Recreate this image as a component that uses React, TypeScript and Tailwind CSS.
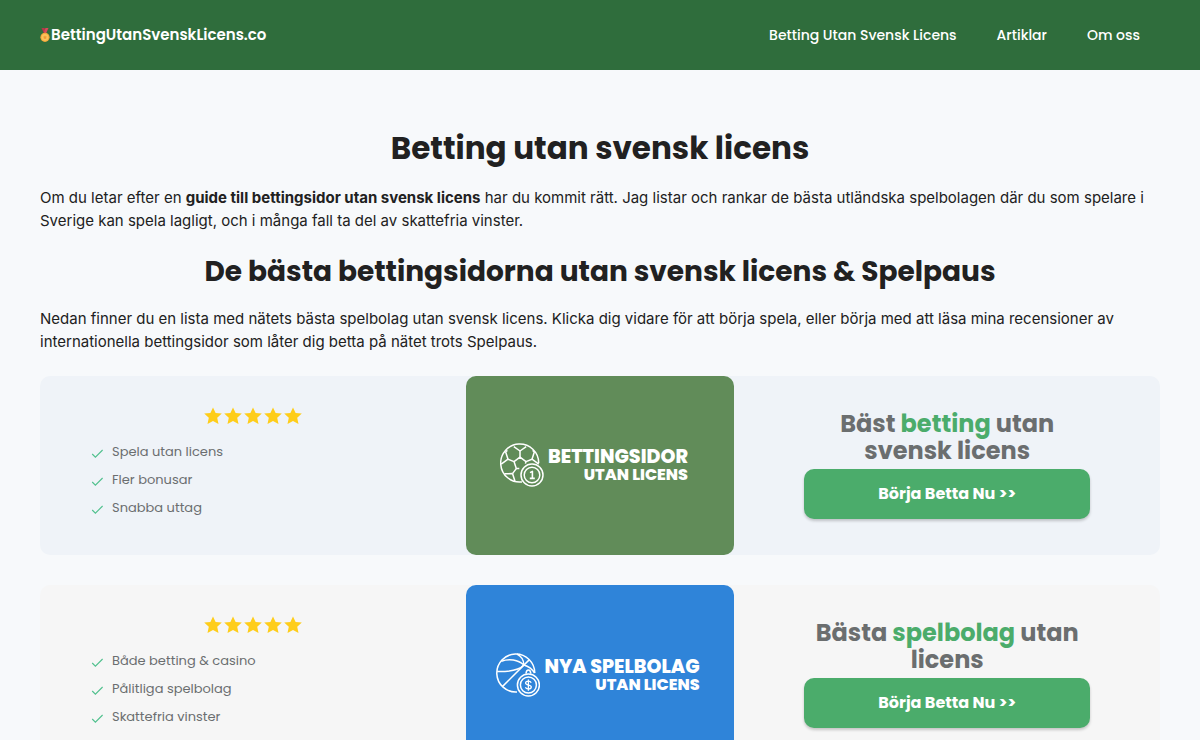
import type { ReactNode } from 'react';

interface Offer {
  id: string;
  perks: string[];
  title: ReactNode;
  logo: ReactNode;
  logoTop: string;
  logoBottom: string;
  cardClass: string;
  bannerClass: string;
}

const navLinks = ['Betting Utan Svensk Licens', 'Artiklar', 'Om oss'];

function Medal() {
  return (
    <svg viewBox="0 0 10 14" className="h-[14px] w-[10px]" aria-hidden="true">
      <path d="M1.5 0h3L6 3.4 4 5.4z" fill="#b8374a" />
      <path d="M8.5 0H5.5L4 4.2l2 1.2z" fill="#d9485a" />
      <circle cx="5" cy="9.3" r="4.6" fill="#f5a83c" />
      <circle cx="5" cy="9.3" r="3.4" fill="#fbc55c" />
      <path d="M5 7.2l.6 1.4 1.5.1-1.1 1 .3 1.5L5 10.4l-1.3.8.3-1.5-1.1-1 1.5-.1z" fill="#f09a35" />
    </svg>
  );
}

function Star() {
  return (
    <svg viewBox="0 0 20 20" className="h-5 w-5" fill="#fecd1a" aria-hidden="true">
      <path d="M10 1.4l2.6 5.5 6.2.7-4.6 4.2 1.3 6.2-5.5-3.1L4.5 18l1.3-6.2L1.2 7.6l6.2-.7z" />
    </svg>
  );
}

function Check() {
  return (
    <svg viewBox="0 0 14 14" className="mt-1 h-[14px] w-[14px] shrink-0" fill="none" stroke="#4fc08d" aria-hidden="true">
      <path d="M2.2 7l3.2 3.2L12.6 3" strokeWidth="1.1" />
    </svg>
  );
}

function FootballLogo() {
  return (
    <svg viewBox="0 0 44 44" className="h-11 w-11 shrink-0" fill="none" stroke="#fff" strokeWidth="1.5" strokeLinejoin="round" aria-hidden="true">
      <path d="M22 38.9A19 19 0 1 1 38.7 20" />
      <path d="M25.4 20.6l.6-2-6-4.4-6 4.4 2.3 7h3" />
      <path d="M20 14.2V8M26 18.6l6-2.4M14 18.6l-6-2.4M16.3 25.6l-3.8 5" />
      <path d="M20 8l-6.2-4.4M20 8l6.2-4.4M8 16.2L5.6 8.8M8 16.2l-6.8 5M12.5 30.6l-7.9.2M12.5 30.6l2.4 7.4M32 16.2l2.4-7.4M32 16.2l6.8 5M5.6 8.8l1.8-1.4M34.4 8.8l-1.8-1.4" />
      <circle cx="32" cy="32" r="11" />
      <circle cx="32" cy="32" r="7.8" />
      <path d="M30 29.6l2.4-1.2v7M29.8 35.4h5" strokeWidth="1.6" />
    </svg>
  );
}

function BasketballLogo() {
  return (
    <svg viewBox="0 0 44 44" className="h-11 w-11 shrink-0" fill="none" stroke="#fff" strokeWidth="1.5" aria-hidden="true">
      <path d="M21 39A19 19 0 1 1 38.8 20" />
      <path d="M6.6 33.4L33.4 6.6" />
      <path d="M1.2 18.6c10.4.2 22.3-1.6 26.6-6.6C22 6.6 13 5.4 5.4 8.2" />
      <path d="M21 1c4 2 7 6.4 6.8 11 4.4 1.2 8.2 3.8 10.8 8" />
      <path d="M30 20.6c.2-2.4 1-3.6 2.4-3.6s2.2 1.2 2.4 3.6" />
      <circle cx="32.4" cy="32" r="11" />
      <circle cx="32.4" cy="32" r="8" />
      <path d="M35.2 29.7c-.5-1.1-1.5-1.5-2.8-1.5-1.6 0-2.8.7-2.8 1.9 0 2.8 5.7 1.2 5.7 4 0 1.2-1.2 1.9-2.9 1.9-1.5 0-2.6-.5-3-1.7M32.4 26.4v11.4" strokeWidth="1.3" />
    </svg>
  );
}

const offers: Offer[] = [
  {
    id: 'bettingsidor',
    perks: ['Spela utan licens', 'Fler bonusar', 'Snabba uttag'],
    title: <>Bäst <span className="text-[#4bac6b]">betting</span> utan svensk licens</>,
    logo: <FootballLogo />,
    logoTop: 'BETTINGSIDOR',
    logoBottom: 'UTAN LICENS',
    cardClass: 'bg-[#eff3f8]',
    bannerClass: 'bg-[#618c59] pr-3 pb-0.5',
  },
  {
    id: 'spelbolag',
    perks: ['Både betting & casino', 'Pålitliga spelbolag', 'Skattefria vinster'],
    title: <>Bästa <span className="text-[#4bac6b]">spelbolag</span> utan licens</>,
    logo: <BasketballLogo />,
    logoTop: 'NYA SPELBOLAG',
    logoBottom: 'UTAN LICENS',
    cardClass: 'bg-[#f6f6f6]',
    bannerClass: 'bg-[#2f84d9] pr-1',
  },
];

function OfferCard({ offer }: { offer: Offer }) {
  return (
    <article className={`grid min-h-[179px] grid-cols-[38fr_24fr_38fr] rounded-[10px] ${offer.cardClass}`}>
      <div className="px-[50px] pt-[30px]">
        <div className="flex justify-center" role="img" aria-label="5 av 5 stjärnor">
          {[1, 2, 3, 4, 5].map(n => <Star key={n} />)}
        </div>
        <ul className="mt-4 text-[13px] leading-5 text-[#6b6e70]">
          {offer.perks.map(perk => (
            <li key={perk} className="mb-2 flex items-center gap-2">
              <Check />
              {perk}
            </li>
          ))}
        </ul>
      </div>

      <a
        href="#"
        className={`flex items-center justify-center gap-1 rounded-[10px] text-white ${offer.bannerClass}`}
      >
        {offer.logo}
        <span className="flex flex-col items-end font-extrabold whitespace-nowrap">
          <span className="text-[19px] leading-5">{offer.logoTop}</span>
          <span className="text-[16px] leading-4">{offer.logoBottom}</span>
        </span>
      </a>

      <div className="flex flex-col justify-center px-[70px] pb-0.5">
        <h3 className="px-1 text-center text-[24px] leading-[27px] font-bold text-[#6b6e6f]">{offer.title}</h3>
        <a
          href="#"
          className="mt-[5px] flex h-[50px] items-center justify-center rounded-[10px] bg-[#4bac6b] text-[16px] font-bold text-white shadow-[0_2px_3px_rgba(0,0,0,0.2)]"
        >
          Börja Betta Nu &gt;&gt;
        </a>
      </div>
    </article>
  );
}

export default function App() {
  return (
    <div className="h-screen overflow-hidden bg-[#f7f9fb] font-['Poppins',Inter,sans-serif] text-[#212121]">
      <header className="flex h-[70px] items-center justify-between bg-[#2f6d3c] px-10 text-white">
        <a href="#" className="flex items-center gap-px text-[15px] font-semibold">
          <Medal />
          BettingUtanSvenskLicens.co
        </a>
        <nav className="flex gap-10 pr-5 text-[14px] font-medium">
          {navLinks.map(link => <a key={link} href="#">{link}</a>)}
        </nav>
      </header>

      <main className="px-10 pt-[58px]">
        <h1 className="text-center text-[31px] leading-10 font-bold">Betting utan svensk licens</h1>
        <p className="mt-[18px] font-['Inter',sans-serif] text-[15px] leading-[23px]">
          Om du letar efter en <strong className="font-bold">guide till bettingsidor utan svensk licens</strong> har
          du kommit rätt. Jag listar och rankar de bästa utländska spelbolagen där du som spelare i Sverige kan spela
          lagligt, och i många fall ta del av skattefria vinster.
        </p>
        <h2 className="mt-[22px] text-center text-[28px] leading-9 font-bold">
          De bästa bettingsidorna utan svensk licens &amp; Spelpaus
        </h2>
        <p className="mt-[17px] font-['Inter',sans-serif] text-[15px] leading-[23px]">
          Nedan finner du en lista med nätets bästa spelbolag utan svensk licens. Klicka dig vidare för att börja
          spela, eller börja med att läsa mina recensioner av internationella bettingsidor som låter dig betta på
          nätet trots Spelpaus.
        </p>
        <section className="mt-[23px] flex flex-col gap-[30px]">
          {offers.map(offer => <OfferCard key={offer.id} offer={offer} />)}
        </section>
      </main>
    </div>
  );
}
